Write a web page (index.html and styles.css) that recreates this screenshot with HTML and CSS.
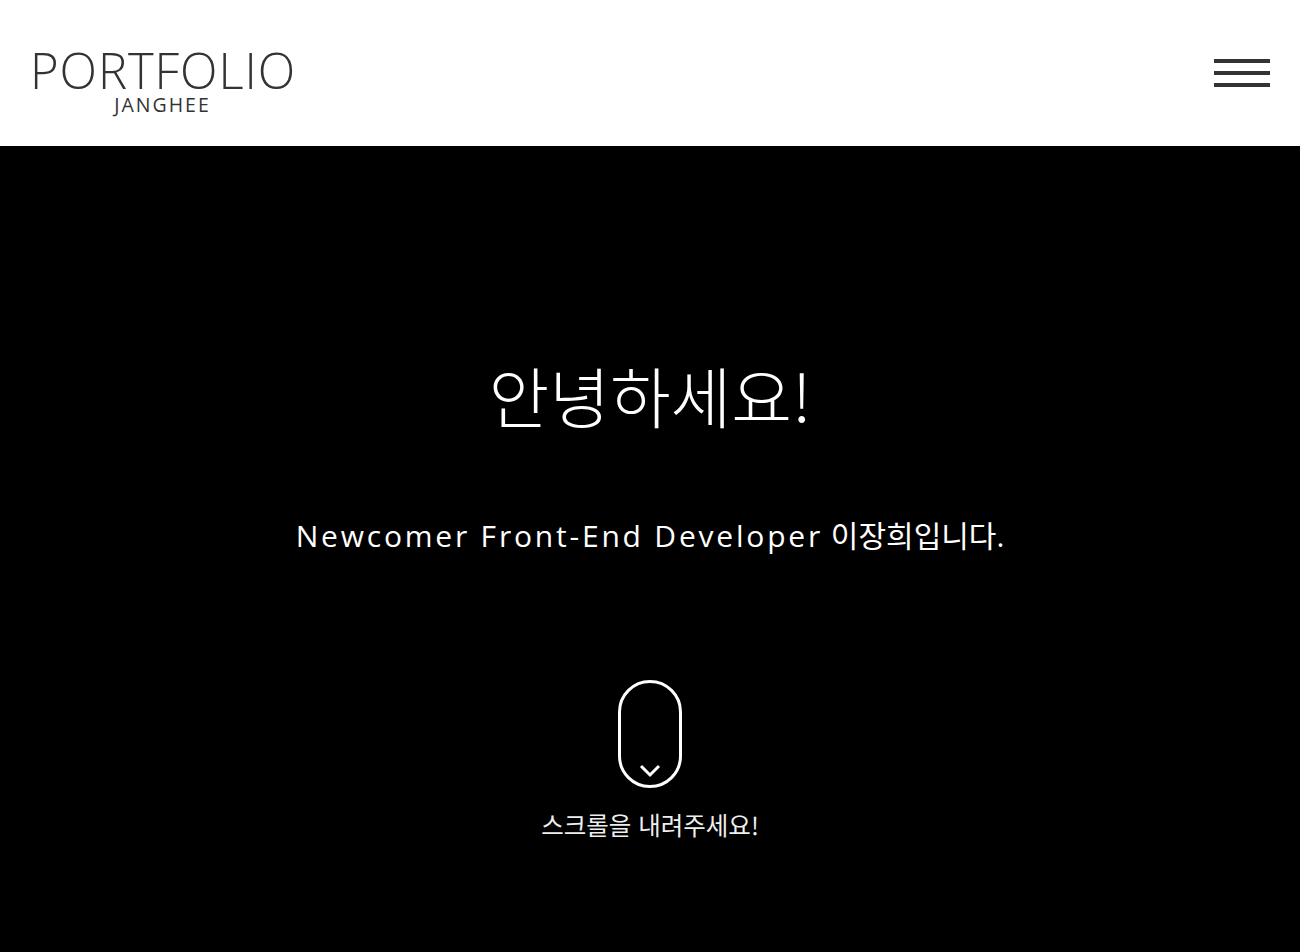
FILE: index.html
```html
<!DOCTYPE html>
<html lang="ko">
<head>
<meta charset="utf-8">
<title>Portfolio - Janghee</title>
<link rel="stylesheet" href="styles.css">
</head>
<body>
<header class="header">
  <a class="logo" href="#">
    <span class="logo-title">PORTFOLIO</span>
    <span class="logo-sub">JANGHEE</span>
  </a>
  <button class="menu" aria-label="menu">
    <span></span><span></span><span></span>
  </button>
</header>
<main class="hero">
  <h1 class="hero-title">안녕하세요!</h1>
  <p class="hero-sub"><span class="latin">Newcomer Front-End Developer</span> 이장희입니다.</p>
  <div class="scroll">
    <div class="mouse">
      <svg class="chevron" width="22" height="14" viewBox="0 0 22 14"><path d="M2 2 L11 11 L20 2" fill="none" stroke="#fff" stroke-width="3"/></svg>
    </div>
    <p class="scroll-text">스크롤을 내려주세요!</p>
  </div>
</main>
</body>
</html>
```
FILE: styles.css
```css
* { box-sizing: border-box; }
html, body { margin: 0; padding: 0; }
body {
  font-family: "Open Sans", "Noto Sans CJK KR", sans-serif;
  background: #000;
}
.header {
  height: 146px;
  background: #fff;
  display: flex;
  align-items: center;
  justify-content: space-between;
  padding: 0 30px 0 30px;
}
.logo {
  display: flex;
  flex-direction: column;
  align-items: center;
  gap: 2px;
  text-decoration: none;
  color: #333;
  margin-top: 16px;
}
.logo-title {
  font-size: 49px;
  font-weight: 300;
  line-height: 46px;
  letter-spacing: 0.9px;
  margin-right: -1px;
}
.logo-sub {
  font-size: 19.5px;
  font-weight: 400;
  line-height: 20px;
  letter-spacing: 2px;
}
.menu {
  background: none;
  border: 0;
  padding: 0;
  width: 56px;
  display: flex;
  flex-direction: column;
  gap: 8px;
  cursor: pointer;
}
.menu span {
  display: block;
  height: 4px;
  background: #333;
}
.hero {
  height: 806px;
  display: flex;
  flex-direction: column;
  align-items: center;
  color: #fff;
  padding-top: 208px;
}
.hero-title {
  margin: 0;
  font-family: "Noto Sans CJK KR", sans-serif;
  font-size: 66px;
  font-weight: 300;
  line-height: 80px;
}
.hero-sub {
  margin: 82px 0 0;
  font-size: 30px;
  font-weight: 400;
  line-height: 40px;
}
.hero-sub .latin {
  letter-spacing: 2.8px;
}
.scroll {
  margin-top: 124px;
  display: flex;
  flex-direction: column;
  align-items: center;
}
.mouse {
  width: 64px;
  height: 108px;
  border: 3px solid #fff;
  border-radius: 32px;
  display: flex;
  justify-content: center;
  align-items: flex-end;
  padding-bottom: 7px;
}
.scroll-text {
  margin: 22px 0 0;
  font-family: "Noto Sans CJK KR", sans-serif;
  font-size: 24.5px;
  font-weight: 400;
  line-height: 30px;
  color: #eee;
}
```
